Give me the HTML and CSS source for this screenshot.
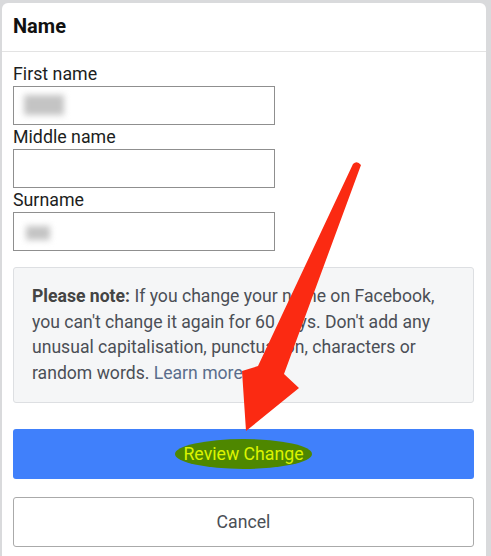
FILE: index.html
```html
<!DOCTYPE html>
<html lang="en">
<head>
    <meta charset="UTF-8">
    <meta name="viewport" content="width=device-width, initial-scale=1.0">
    <title>Name</title>
    <link rel="stylesheet" href="styles.css">
</head>
<body>

<div class="card">
    <div class="card-header">Name</div>

    <div class="card-body">
        <div class="form-group">
            <label>First name</label>
            <div class="field"><span class="blur blur-first"></span></div>
        </div>
        <div class="form-group">
            <label>Middle name</label>
            <div class="field"></div>
        </div>
        <div class="form-group">
            <label>Surname</label>
            <div class="field"><span class="blur blur-last"></span></div>
        </div>

        <div class="note">
            <b>Please note:</b> If you change your name on Facebook, you can't change it again for 60 days. Don't add any unusual capitalisation, punctuation, characters or random words. <span class="learn">Learn more</span>
        </div>

        <button class="btn btn-primary"><span class="highlight">Review Change</span></button>
        <button class="btn btn-cancel">Cancel</button>
    </div>

    <!-- red annotation arrow drawn over the form -->
    <svg class="arrow" width="491" height="556" viewBox="0 0 491 556">
        <path d="M353 164 Q357 160 361 165 L284 374 L299 388 L246 431 L242 371 L258 366 Z" fill="#fb2a12"/>
    </svg>
</div>

</body>
</html>
```

FILE: styles.css
```css
body {
    margin: 0;
    background: #d9dadc;
    font-family: Roboto, "Noto Sans", sans-serif;
}

.card {
    position: relative;
    margin: 3px 5px 0 2px;
    height: 553px;
    background: #fff;
    border-radius: 6px 6px 0 0;
}

.card-header {
    height: 48px;
    padding-left: 11px;
    line-height: 47px;
    font-size: 20px;
    font-weight: bold;
    color: #111;
    border-bottom: 1px solid #e3e3e3;
}

.card-body {
    padding: 10px 12px 0 11px;
}

.form-group label {
    display: block;
    height: 24px;
    line-height: 24px;
    font-size: 17.8px;
    color: #1c1e21;
}

.field {
    box-sizing: border-box;
    width: 262px;
    height: 39px;
    border: 1px solid #8f8f8f;
    position: relative;
}

.blur {
    position: absolute;
    background: #c4c4c4;
    filter: blur(3px);
}

.blur-first {
    left: 10px;
    top: 8px;
    width: 40px;
    height: 20px;
}

.blur-last {
    left: 12px;
    top: 13px;
    width: 24px;
    height: 14px;
}

.note {
    margin-top: 16px;
    padding: 16px 18px;
    background: #f5f6f7;
    border: 1px solid #dddfe2;
    border-radius: 3px;
    font-size: 17.6px;
    line-height: 25.5px;
    color: #4b4f56;
}

.note b {
    color: #444;
}

.learn {
    color: #5a6d8c;
}

.btn {
    display: block;
    width: 100%;
    height: 50px;
    border-radius: 3px;
    font-family: Roboto, "Noto Sans", sans-serif;
    font-size: 17.7px;
    cursor: pointer;
}

.btn-primary {
    margin-top: 26px;
    background: #4080fb;
    border: none;
}

.highlight {
    display: inline-block;
    padding: 5px 8px;
    background: #4e8700;
    border-radius: 50%;
    color: #dcf400;
}

.btn-cancel {
    margin-top: 18px;
    background: #fff;
    border: 1px solid #aaa;
    color: #4b4f56;
}

.arrow {
    position: absolute;
    left: -2px;
    top: -3px;
    pointer-events: none;
}
```
